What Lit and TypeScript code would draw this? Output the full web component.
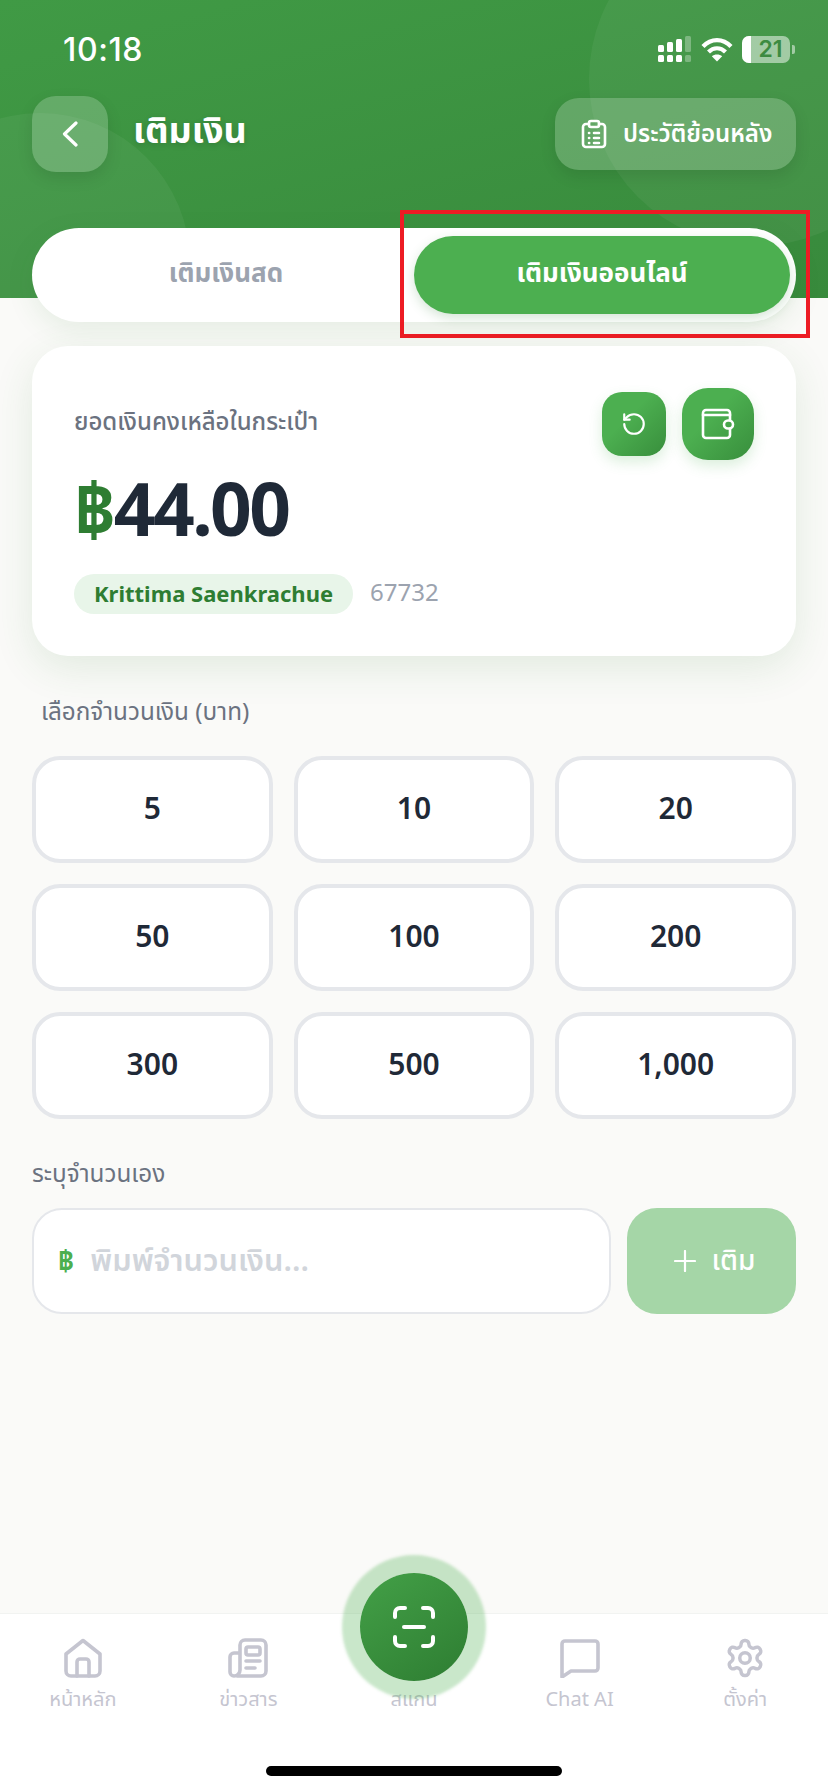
import { LitElement, html, css, svg } from "lit";
import { customElement } from "lit/decorators.js";

const AMOUNTS = ["5", "10", "20", "50", "100", "200", "300", "500", "1,000"];

const NAV = [
  { label: "หน้าหลัก", icon: svg`<svg class="ni" width="38" height="40" viewBox="0 0 38 40"><path d="M2 16 L19 2.5 L36 16 V33 a5 5 0 0 1-5 5 H7 a5 5 0 0 1-5-5 Z"/><path d="M13 38 V24 a3 3 0 0 1 3-3 h6 a3 3 0 0 1 3 3 V38"/></svg>` },
  { label: "ข่าวสาร", icon: svg`<svg class="ni" width="40" height="40" viewBox="0 0 40 40"><path d="M9 38 H33 a5 5 0 0 0 5-5 V7 a5 5 0 0 0-5-5 H17 a5 5 0 0 0-5 5 V32 a6 6 0 0 1-6 6 a4 4 0 0 1-4-4 V19 a4 4 0 0 1 4-4 h6"/><rect x="18" y="9" width="14" height="8" rx="2"/><path d="M18 23 H32 M18 30 H27"/></svg>` },
  { label: "สแกน", icon: null },
  { label: "Chat AI", icon: svg`<svg class="ni" width="40" height="40" viewBox="0 0 40 40"><path d="M2 6 a3 3 0 0 1 3-3 H35 a3 3 0 0 1 3 3 V30 a3 3 0 0 1-3 3 H11 L2 39 Z"/></svg>` },
  { label: "ตั้งค่า", icon: svg`<svg class="ni gear" width="42" height="42" viewBox="0 0 24 24"><path d="M12.22 2h-.44a2 2 0 0 0-2 2v.18a2 2 0 0 1-1 1.73l-.43.25a2 2 0 0 1-2 0l-.15-.08a2 2 0 0 0-2.73.73l-.22.38a2 2 0 0 0 .73 2.73l.15.1a2 2 0 0 1 1 1.72v.51a2 2 0 0 1-1 1.74l-.15.09a2 2 0 0 0-.73 2.73l.22.38a2 2 0 0 0 2.73.73l.15-.08a2 2 0 0 1 2 0l.43.25a2 2 0 0 1 1 1.73V20a2 2 0 0 0 2 2h.44a2 2 0 0 0 2-2v-.18a2 2 0 0 1 1-1.73l.43-.25a2 2 0 0 1 2 0l.15.08a2 2 0 0 0 2.73-.73l.22-.39a2 2 0 0 0-.73-2.73l-.15-.08a2 2 0 0 1-1-1.74v-.5a2 2 0 0 1 1-1.74l.15-.09a2 2 0 0 0 .73-2.73l-.22-.38a2 2 0 0 0-2.73-.73l-.15.08a2 2 0 0 1-2 0l-.43-.25a2 2 0 0 1-1-1.73V4a2 2 0 0 0-2-2z"/><circle cx="12" cy="12" r="3"/></svg>` },
];

@customElement("app-root")
export class AppRoot extends LitElement {
  static styles = css`
    :host {
      display: block;
      width: 828px;
      height: 1792px;
      font-family: "Noto Sans", "Noto Sans Thai", sans-serif;
      color: #1f2937;
    }
    .page {
      position: relative;
      display: flex;
      flex-direction: column;
      height: 1792px;
      background: #fafaf8;
      overflow: hidden;
    }
    .hero {
      position: relative;
      height: 298px;
      flex: none;
      background: linear-gradient(165deg, #409a45 0%, #388a3c 100%);
      overflow: hidden;
    }
    .blob {
      position: absolute;
      border-radius: 50%;
      background: rgba(255, 255, 255, 0.05);
    }
    .blob.a { left: 589px; top: -88px; width: 334px; height: 334px; }
    .blob.b { left: -110px; top: 113px; width: 300px; height: 300px; }
    .status {
      position: relative;
      display: flex;
      align-items: center;
      justify-content: space-between;
      height: 30px;
      padding: 34px 33px 1px 63px;
      font-family: Inter, sans-serif;
      color: #fff;
    }
    .time { font-size: 32px; font-weight: 500; letter-spacing: 0.6px; }
    .status-icons { display: flex; align-items: center; gap: 9px; }
    .battery {
      position: relative;
      display: flex;
      width: 48px;
      height: 27px;
      border-radius: 7px;
      overflow: hidden;
      background: rgba(255, 255, 255, 0.5);
    }
    .battery i { width: 9px; background: #fff; }
    .battery b {
      position: absolute;
      inset: 0 0 0 9px;
      display: flex;
      align-items: center;
      justify-content: center;
      font-size: 23px;
      font-weight: 600;
      color: #3d8b41;
    }
    .tip {
      width: 3px;
      height: 9px;
      margin-left: -7px;
      border-radius: 0 2px 2px 0;
      background: rgba(255, 255, 255, 0.5);
    }
    .bar {
      position: relative;
      display: flex;
      align-items: center;
      justify-content: space-between;
      margin-top: 31px;
      padding: 0 32px;
      height: 76px;
    }
    .bar-left { display: flex; align-items: center; gap: 25px; }
    .back {
      display: flex;
      align-items: center;
      justify-content: center;
      width: 76px;
      height: 76px;
      border-radius: 24px;
      background: rgba(255, 255, 255, 0.2);
      box-shadow: 0 6px 16px rgba(0, 0, 0, 0.1);
    }
    .title {
      padding-bottom: 4px;
      font-size: 36px;
      font-weight: 700;
      color: #fff;
      text-shadow: 0 2px 6px rgba(0, 0, 0, 0.15);
    }
    .history {
      display: flex;
      align-items: center;
      gap: 16px;
      box-sizing: border-box;
      width: 241px;
      height: 72px;
      padding-left: 26px;
      border-radius: 24px;
      background: rgba(255, 255, 255, 0.2);
      box-shadow: 0 6px 16px rgba(0, 0, 0, 0.1);
      font-size: 24px;
      font-weight: 600;
      color: #fff;
      white-space: nowrap;
    }
    .history svg { flex: none; }
    main {
      position: relative;
      flex: 1;
      display: flex;
      flex-direction: column;
      margin-top: -70px;
      padding: 0 32px;
    }
    .tabs {
      position: relative;
      display: grid;
      grid-template-columns: 1fr 376px;
      box-sizing: border-box;
      height: 94px;
      padding: 8px 6px;
      border-radius: 47px;
      background: #fff;
      box-shadow: 0 8px 28px rgba(46, 125, 50, 0.1);
    }
    .tab {
      display: flex;
      align-items: center;
      justify-content: center;
      padding-bottom: 2px;
      font-size: 26px;
      font-weight: 700;
      color: #9ca3af;
    }
    .tab.on {
      border-radius: 39px;
      background: #4caf50;
      color: #fff;
      box-shadow: 0 4px 12px rgba(46, 125, 50, 0.2);
    }
    .mark {
      position: absolute;
      left: 368px;
      top: -18px;
      width: 410px;
      height: 128px;
      box-sizing: border-box;
      border: 4px solid #ed1c24;
    }
    .card {
      position: relative;
      box-sizing: border-box;
      height: 310px;
      margin-top: 24px;
      padding: 58px 42px 0;
      border-radius: 36px;
      background: #fff;
      box-shadow: 0 12px 40px rgba(46, 125, 50, 0.12);
    }
    .card-label { font-size: 24px; font-weight: 500; color: #6b7280; line-height: 34px; }
    .balance {
      display: flex;
      align-items: baseline;
      margin-top: 28px;
      font-size: 73px;
      font-weight: 700;
      line-height: 84px;
      letter-spacing: -2.6px;
      color: #1f2937;
    }
    .balance span { color: #2e7d32; }
    .who { display: flex; align-items: center; gap: 17px; margin-top: 24px; }
    .pill {
      display: flex;
      align-items: center;
      box-sizing: border-box;
      height: 40px;
      padding: 0 20px 3px;
      border-radius: 20px;
      background: #e8f5e9;
      font-size: 22px;
      font-weight: 700;
      color: #2e7d32;
    }
    .uid { padding-bottom: 5px; font-size: 24px; color: #9ca3af; }
    .actions {
      position: absolute;
      right: 42px;
      top: 42px;
      display: flex;
      align-items: center;
      gap: 16px;
    }
    .act {
      display: flex;
      align-items: center;
      justify-content: center;
      background: linear-gradient(135deg, #4caf50 40%, #388e3c 100%);
      box-shadow: 0 6px 14px rgba(76, 175, 80, 0.2);
    }
    .act.s { width: 64px; height: 64px; border-radius: 20px; }
    .act.l { width: 72px; height: 72px; border-radius: 26px; }
    .section { font-size: 24.3px; color: #6b7280; line-height: 32px; }
    .pick { margin: 39px 0 0 9px; }
    .grid {
      display: grid;
      grid-template-columns: repeat(3, 1fr);
      gap: 21px;
      margin-top: 29px;
    }
    .amt {
      display: flex;
      align-items: center;
      justify-content: center;
      box-sizing: border-box;
      height: 107px;
      padding-bottom: 5px;
      border: 4px solid #e5e7eb;
      border-radius: 28px;
      background: #fff;
      font-size: 30px;
      font-weight: 600;
      color: #1f2937;
    }
    .own { margin-top: 38px; }
    .custom { display: flex; gap: 16px; margin-top: 19px; }
    .input {
      flex: 1;
      display: flex;
      align-items: center;
      gap: 16px;
      box-sizing: border-box;
      height: 106px;
      padding-left: 24px;
      border: 2px solid #e5e7eb;
      border-radius: 30px;
      background: #fff;
      font-size: 30.7px;
      font-weight: 600;
      color: #d1d5db;
    }
    .input span { font-size: 28px; font-weight: 700; color: #4caf50; }
    .add {
      display: flex;
      align-items: center;
      justify-content: center;
      gap: 16px;
      box-sizing: border-box;
      width: 169px;
      height: 106px;
      padding-left: 6px;
      border-radius: 30px;
      background: #a5d6a7;
      font-size: 28px;
      font-weight: 500;
      color: #fff;
    }
    nav {
      position: relative;
      flex: none;
      display: grid;
      grid-template-columns: repeat(5, 1fr);
      box-sizing: border-box;
      height: 179px;
      padding: 23px 0 0;
      border-top: 1px solid #f1f3f1;
      background: #fff;
    }
    .item {
      display: flex;
      flex-direction: column;
      align-items: center;
      height: 76px;
      font-size: 20px;
      color: #c5c5d0;
    }
    .item .slot { display: flex; align-items: center; height: 42px; }
    .item .lbl { margin-top: 7px; line-height: 26px; }
    .ni { fill: none; stroke: #c5c5d0; stroke-width: 3.6; stroke-linecap: round; stroke-linejoin: round; }
    .ni.gear { stroke-width: 2; }
    .fab {
      position: absolute;
      left: 360px;
      top: -41px;
      width: 108px;
      height: 108px;
      display: flex;
      align-items: center;
      justify-content: center;
      border-radius: 50%;
      background: linear-gradient(145deg, #43a047 0%, #2e7d32 100%);
      box-shadow: 0 0 3px 18px rgba(76, 175, 80, 0.3);
    }
    .indicator {
      position: absolute;
      left: 266px;
      bottom: 16px;
      width: 296px;
      height: 10px;
      border-radius: 5px;
      background: #000;
    }
  `;

  render() {
    return html`
      <div class="page">
        <header class="hero">
          <div class="blob a"></div>
          <div class="blob b"></div>
          <div class="status">
            <span class="time">10:18</span>
            <div class="status-icons">
              <svg width="34" height="27" viewBox="0 0 34 27" fill="#fff">
                <rect x="0" y="9" width="6" height="7" rx="1.5"/><rect x="0" y="19" width="6" height="7" rx="1.5"/>
                <rect x="9" y="6" width="6" height="10" rx="1.5"/><rect x="9" y="19" width="6" height="7" rx="1.5"/>
                <rect x="18" y="3" width="6" height="13" rx="1.5"/><rect x="18" y="19" width="6" height="7" rx="1.5"/>
                <rect x="27" y="0" width="6" height="16" rx="1.5" opacity=".3"/><rect x="27" y="19" width="6" height="7" rx="1.5" opacity=".3"/>
              </svg>
              <svg width="32" height="25" viewBox="0 0 32 25" fill="none" stroke="#fff" stroke-width="4.2">
                <path d="M2 9.5 C10 1 22 1 30 9.5"/><path d="M7.5 15 C12.5 10 19.5 10 24.5 15"/>
                <path d="M16 24.5 L10.8 19.3 C13.5 16.8 18.5 16.8 21.2 19.3 Z" fill="#fff" stroke="none"/>
              </svg>
              <div class="battery"><i></i><b>21</b></div>
              <div class="tip"></div>
            </div>
          </div>
          <div class="bar">
            <div class="bar-left">
              <div class="back">
                <svg width="16" height="26" viewBox="0 0 16 26" fill="none" stroke="#fff" stroke-width="3.2" stroke-linecap="round" stroke-linejoin="round"><path d="M14 2 L2.5 13 L14 24"/></svg>
              </div>
              <div class="title">เติมเงิน</div>
            </div>
            <div class="history">
              <svg width="26" height="30" viewBox="0 0 26 30" fill="none" stroke="#fff" stroke-width="2.6" stroke-linecap="round" stroke-linejoin="round">
                <path d="M8 5 H5 a3 3 0 0 0-3 3 V25 a3 3 0 0 0 3 3 H21 a3 3 0 0 0 3-3 V8 a3 3 0 0 0-3-3 H18"/>
                <rect x="8" y="2" width="10" height="6" rx="2"/>
                <path d="M8 14 H8.2 M13 14 H18 M8 19 H8.2 M13 19 H18 M8 24 H8.2 M13 24 H18"/>
              </svg>
              ประวัติย้อนหลัง
            </div>
          </div>
        </header>
        <main>
          <div class="tabs">
            <div class="tab">เติมเงินสด</div>
            <div class="tab on">เติมเงินออนไลน์</div>
            <div class="mark"></div>
          </div>
          <section class="card">
            <div class="card-label">ยอดเงินคงเหลือในกระเป๋า</div>
            <div class="balance"><span>฿</span>44.00</div>
            <div class="who">
              <div class="pill">Krittima Saenkrachue</div>
              <div class="uid">67732</div>
            </div>
            <div class="actions">
              <div class="act s">
                <svg width="26" height="26" viewBox="0 0 24 24" fill="none" stroke="#fff" stroke-width="2" stroke-linecap="round" stroke-linejoin="round"><path d="M3 12a9 9 0 1 0 9-9 9.75 9.75 0 0 0-6.74 2.74L3 8"/><path d="M3 3v5h5"/></svg>
              </div>
              <div class="act l">
                <svg width="34" height="32" viewBox="0 0 34 32" fill="none" stroke="#fff" stroke-width="2.6" stroke-linecap="round" stroke-linejoin="round">
                  <path d="M29 12 V5 a3 3 0 0 0-3-3 H5 a3 3 0 0 0-3 3 V27 a3 3 0 0 0 3 3 H26 a3 3 0 0 0 3-3 V21"/>
                  <path d="M2 7 H29"/>
                  <rect x="23" y="12.5" width="9" height="8" rx="4"/>
                </svg>
              </div>
            </div>
          </section>
          <div class="section pick">เลือกจำนวนเงิน (บาท)</div>
          <div class="grid">
            ${AMOUNTS.map((a) => html`<div class="amt">${a}</div>`)}
          </div>
          <div class="section own">ระบุจำนวนเอง</div>
          <div class="custom">
            <div class="input"><span>฿</span>พิมพ์จำนวนเงิน...</div>
            <div class="add">
              <svg width="22" height="22" viewBox="0 0 22 22" fill="none" stroke="#fff" stroke-width="2.2" stroke-linecap="round"><path d="M11 1 V21 M1 11 H21"/></svg>
              เติม
            </div>
          </div>
        </main>
        <nav>
          ${NAV.map(
            (n) => html`<div class="item"><div class="slot">${n.icon}</div><div class="lbl">${n.label}</div></div>`
          )}
          <div class="fab">
            <svg width="42" height="42" viewBox="0 0 42 42" fill="none" stroke="#fff" stroke-width="4" stroke-linecap="round" stroke-linejoin="round">
              <path d="M2 11 V7 a5 5 0 0 1 5-5 H12"/><path d="M30 2 H35 a5 5 0 0 1 5 5 V11"/>
              <path d="M40 31 V35 a5 5 0 0 1-5 5 H30"/><path d="M12 40 H7 a5 5 0 0 1-5-5 V31"/>
              <path d="M11 21 H31"/>
            </svg>
          </div>
          <div class="indicator"></div>
        </nav>
      </div>
    `;
  }
}
